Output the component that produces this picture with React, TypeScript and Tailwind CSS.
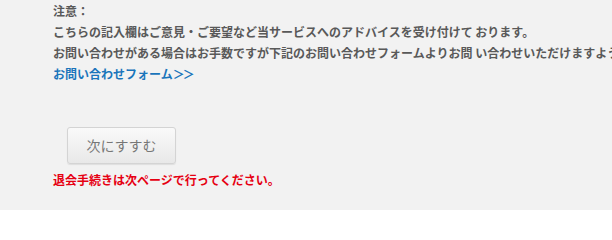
export default function App() {
  const font = '"Noto Sans CJK JP", "Noto Sans", sans-serif';
  return (
    <div className="w-[612px] h-[210px] bg-[#f2f2f2] overflow-hidden" style={{ fontFamily: font }}>
      <div className="pl-[53px] pt-[0px] text-[12px] leading-[21px] font-bold text-[#595959] whitespace-nowrap">
        <p>注意：</p>
        <p>こちらの記入欄はご意見・ご要望など当サービスへのアドバイスを受け付けて おります。</p>
        <p>お問い合わせがある場合はお手数ですが下記のお問い合わせフォームよりお問 い合わせいただけますようお願いいたします。</p>
        <p>
          <a className="text-[#1a75bb]">お問い合わせフォーム<span className="tracking-[-2px]">＞＞</span></a>
        </p>
      </div>
      <div className="pl-[67px] pt-[43px]">
        <button className="w-[109px] h-[37px] rounded-[3px] border border-[#d4d4d4] bg-gradient-to-b from-[#fafafa] to-[#e8e8e8] text-[14px] text-[#777] font-normal shadow-[0_1px_1px_rgba(0,0,0,0.08)]">
          次にすすむ
        </button>
      </div>
      <p className="pl-[53px] pt-[5px] text-[12px] leading-[21px] font-bold text-[#e60012]">
        退会手続きは次ページで行ってください。
      </p>
    </div>
  );
}
